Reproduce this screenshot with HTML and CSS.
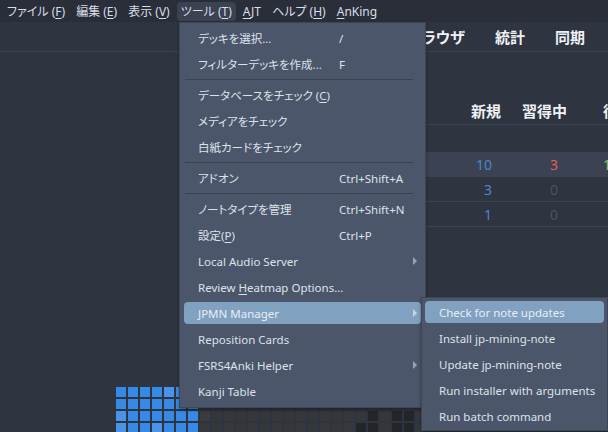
FILE: index.html
```html
<!DOCTYPE html>
<html lang="ja">
<head>
<meta charset="utf-8">
<link rel="stylesheet" href="styles.css">
</head>
<body>
<div class="menubar">
  <span class="mb">ファイル (<u>F</u>)</span>
  <span class="mb">編集 (<u>E</u>)</span>
  <span class="mb">表示 (<u>V</u>)</span>
  <span class="mb active">ツール (<u>T</u>)</span>
  <span class="mb"><u>A</u>JT</span>
  <span class="mb">ヘルプ (<u>H</u>)</span>
  <span class="mb"><u>A</u>nKing</span>
</div>
<div class="toolbar">
  <span class="tb">デッキ</span>
  <span class="tb">追加</span>
  <span class="tb">ブラウザ</span>
  <span class="tb">統計</span>
  <span class="tb">同期</span>
</div>
<div class="decks">
  <div class="drow head">
    <span class="name"></span>
    <span class="ca">新規</span>
    <span class="cb">習得中</span>
    <span class="cc">復習期日</span>
  </div>
  <div class="drow spacer"></div>
  <div class="drow current">
    <span class="name"></span>
    <span class="ca new">10</span>
    <span class="cb lrn">3</span>
    <span class="cc due">1</span>
  </div>
  <div class="drow">
    <span class="name"></span>
    <span class="ca new">3</span>
    <span class="cb zero">0</span>
    <span class="cc"></span>
  </div>
  <div class="drow">
    <span class="name"></span>
    <span class="ca new">1</span>
    <span class="cb zero">0</span>
    <span class="cc"></span>
  </div>
</div>
<div class="heatmap">
  <i class="b"></i><i class="b"></i><i class="b"></i><i class="b"></i><i class="b2"></i><i class="b"></i><i class="b"></i><i class="g"></i><i class="g"></i><i class="g"></i><i class="g"></i><i class="g"></i><i class="g"></i><i class="g"></i><i class="g"></i><i class="g"></i><i class="g"></i><i class="g"></i><i class="g"></i><i class="g"></i><i class="g"></i><i class="g"></i><i class="g"></i><i class="g"></i><i class="g"></i><i class="g"></i>
  <i class="b"></i><i class="b"></i><i class="b"></i><i class="b"></i><i class="b"></i><i class="b"></i><i class="b"></i><i class="g"></i><i class="g"></i><i class="g"></i><i class="g"></i><i class="g"></i><i class="g"></i><i class="g"></i><i class="g"></i><i class="g"></i><i class="g"></i><i class="g"></i><i class="g"></i><i class="g"></i><i class="g"></i><i class="g"></i><i class="g"></i><i class="g"></i><i class="g"></i><i class="g"></i>
  <i class="b2"></i><i class="b"></i><i class="b"></i><i class="b"></i><i class="b"></i><i class="b"></i><i class="b"></i><i class="g2"></i><i class="g"></i><i class="g"></i><i class="g"></i><i class="g"></i><i class="g"></i><i class="g"></i><i class="g"></i><i class="g"></i><i class="g"></i><i class="g"></i><i class="g"></i><i class="g"></i><i class="g"></i><i class="d"></i><i class="g"></i><i class="d"></i><i class="d"></i><i class="g"></i>
  <i class="b2"></i><i class="b"></i><i class="b"></i><i class="b2"></i><i class="b"></i><i class="b"></i><i class="b"></i><i class="g"></i><i class="g"></i><i class="g"></i><i class="g"></i><i class="g"></i><i class="g"></i><i class="g"></i><i class="g"></i><i class="g"></i><i class="g"></i><i class="g"></i><i class="g"></i><i class="g"></i><i class="d"></i><i class="d"></i><i class="g"></i><i class="d"></i><i class="d"></i><i class="g"></i>
</div>

<div class="menu main-menu">
  <div class="mi"><span class="lbl">デッキを選択...</span><span class="sc">/</span></div>
  <div class="mi"><span class="lbl">フィルターデッキを作成...</span><span class="sc">F</span></div>
  <div class="sep"></div>
  <div class="mi"><span class="lbl">データベースをチェック (<u>C</u>)</span></div>
  <div class="mi"><span class="lbl">メディアをチェック</span></div>
  <div class="mi"><span class="lbl">白紙カードをチェック</span></div>
  <div class="sep"></div>
  <div class="mi"><span class="lbl">アドオン</span><span class="sc">Ctrl+Shift+A</span></div>
  <div class="sep"></div>
  <div class="mi"><span class="lbl">ノートタイプを管理</span><span class="sc">Ctrl+Shift+N</span></div>
  <div class="mi"><span class="lbl">設定(<u>P</u>)</span><span class="sc">Ctrl+P</span></div>
  <div class="mi"><span class="lbl">Local Audio Server</span><span class="arrow"></span></div>
  <div class="mi"><span class="lbl">Review <u>H</u>eatmap Options...</span></div>
  <div class="mi hl"><span class="lbl">JPMN Manager</span><span class="arrow"></span></div>
  <div class="mi"><span class="lbl">Reposition Cards</span></div>
  <div class="mi"><span class="lbl">FSRS4Anki Helper</span><span class="arrow"></span></div>
  <div class="mi"><span class="lbl">Kanji Table</span></div>
</div>

<div class="menu sub-menu">
  <div class="mi hl">Check for note updates</div>
  <div class="mi">Install jp-mining-note</div>
  <div class="mi">Update jp-mining-note</div>
  <div class="mi">Run installer with arguments</div>
  <div class="mi">Run batch command</div>
</div>
</body>
</html>
```

FILE: styles.css
```css
html, body {
  margin: 0;
  padding: 0;
}
body {
  width: 608px;
  height: 432px;
  overflow: hidden;
  position: relative;
  background: #2e3440;
  color: #d8dee9;
  font-family: "Noto Sans", "Noto Sans CJK JP", sans-serif;
  font-size: 11.5px;
  font-feature-settings: "palt";
}
u { text-decoration: underline; text-underline-offset: 2px; }

.menubar {
  height: 22px;
  background: #2a2e38;
  display: flex;
  align-items: center;
  gap: 3px;
  padding-left: 3px;
  box-sizing: border-box;
  font-size: 12px;
}
.mb {
  height: 19px;
  line-height: 19px;
  padding: 0 4px;
  border-radius: 4px;
  white-space: nowrap;
}
.mb.active { background: #3b4252; }

.toolbar {
  height: 29px;
  border-bottom: 1px solid #3b4252;
  display: flex;
  justify-content: flex-end;
  align-items: center;
  gap: 30px;
  padding-right: 23px;
  font-family: "Noto Sans CJK JP", sans-serif;
  font-weight: bold;
  font-size: 15px;
  color: #eef1f6;
}

.decks {
  margin-top: 44px;
  margin-left: 185px;
  width: 480px;
}
.drow {
  display: grid;
  grid-template-columns: 255px 62px 66px 97px;
  height: 24px;
  align-items: center;
  border-bottom: 1px solid #3b4252;
  font-size: 14px;
}
.drow.head {
  height: 28px;
  font-family: "Noto Sans CJK JP", sans-serif;
  font-weight: bold;
  font-size: 15px;
  color: #eef1f6;
}
.drow.spacer { height: 27px; border-bottom: none; }
.drow.current { background: #3b4252; border-bottom-color: #3b4252; }
.ca { text-align: right; padding-right: 10px; }
.cb { text-align: right; padding-right: 10px; }
.cc { text-align: left; padding-left: 35px; white-space: nowrap; }
.head .ca { padding-right: 1px; }
.head .cb { padding-right: 1px; }
.new { color: #4f86c8; }
.lrn { color: #e0604f; }
.due { color: #8fbc6f; }
.zero { color: #4a5262; }

.heatmap {
  margin-top: 160px;
  margin-left: 116px;
  display: grid;
  grid-template-columns: repeat(26, 10px);
  grid-auto-rows: 10px;
  gap: 2px;
}
.heatmap i { display: block; }
.heatmap .b { background: #3789e6; }
.heatmap .b2 { background: #4994e8; }
.heatmap .g { background: #35373b; }
.heatmap .g2 { background: #393b3f; }
.heatmap .d { background: #242528; }

.menu {
  position: absolute;
  display: flex;
  flex-direction: column;
  background: #4c566a;
  border: 1px solid #3e4656;
  box-shadow: 0 2px 3px rgba(0,0,0,0.35);
  box-sizing: border-box;
}
.main-menu {
  left: 179px;
  top: 22px;
  width: 247px;
  padding: 2px 4px 3px;
}
.sub-menu {
  left: 421px;
  top: 297px;
  width: 187px;
  padding: 1px 3px;
}
.mi {
  flex: 0 0 22px;
  height: 22px;
  margin: 2px 0;
  padding: 0 0 0 14px;
  border-radius: 4px;
  display: flex;
  align-items: center;
  white-space: nowrap;
  color: #dde2ea;
}
.mi.hl { background: #81a1c1; color: #e8edf3; }
.lbl { flex: 0 0 141px; }
.sc { flex: 1; }
.arrow {
  margin-left: auto;
  margin-right: 4px;
  width: 0;
  height: 0;
  border-top: 4px solid transparent;
  border-bottom: 4px solid transparent;
  border-left: 4px solid #9aa3b3;
}
.hl .arrow { border-left-color: #c8d3e0; }
.sep {
  flex: 0 0 1px;
  height: 1px;
  margin: 2px 8px 2px 1px;
  background: #3b4252;
}
```
